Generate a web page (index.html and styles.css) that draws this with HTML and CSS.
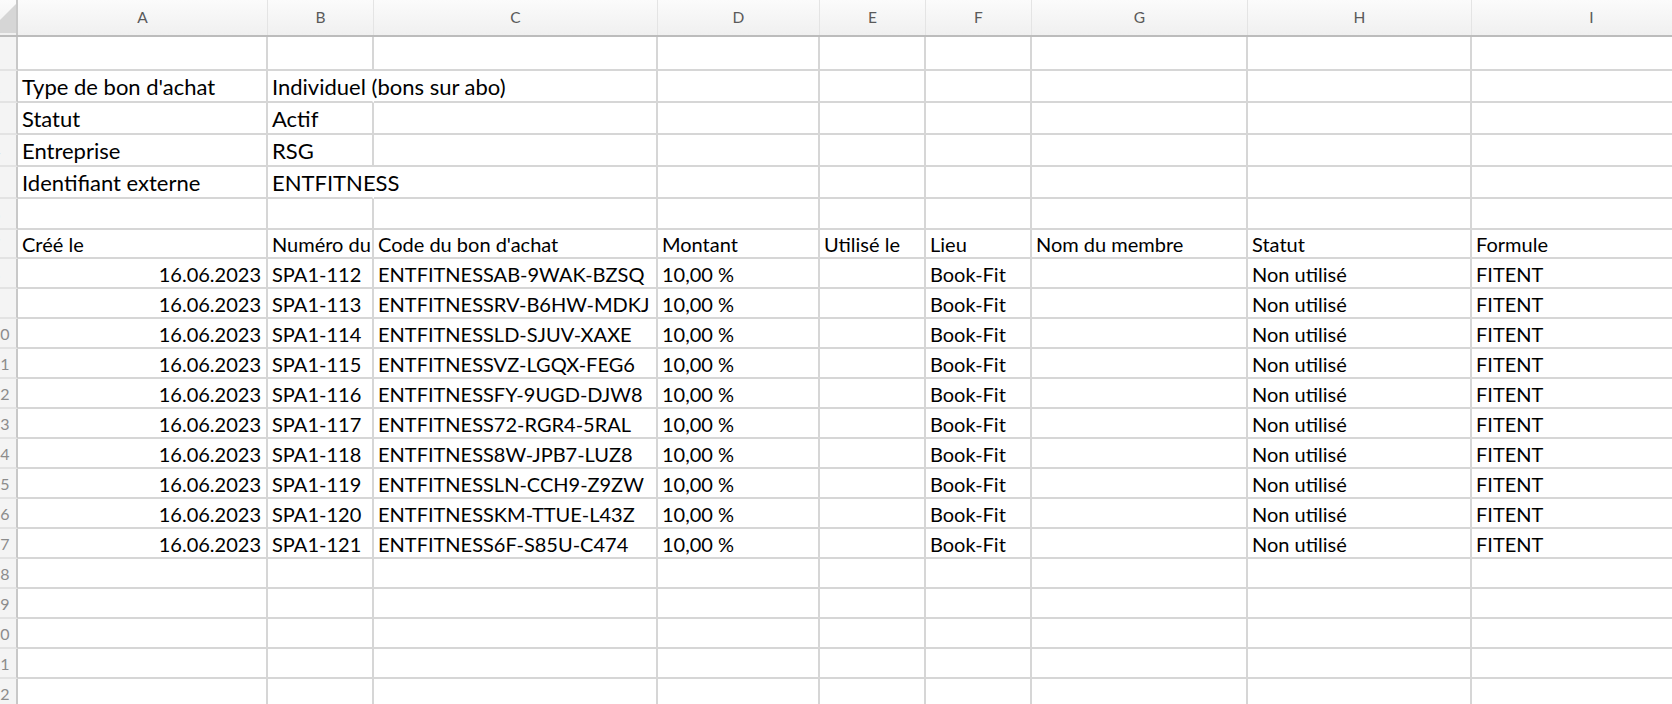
FILE: index.html
```html
<!DOCTYPE html>
<html lang="fr">
<head>
  <meta charset="UTF-8" />
  <meta name="viewport" content="width=device-width, initial-scale=1.0"/>
  <title>Bons d'achat - ENTFITNESS</title>
  <link rel="stylesheet" href="styles.css">
</head>
<body>
  <div class="sheet">
    <div class="row head">
      <div class="corner">
        <svg width="16" height="35" viewBox="0 0 16 35"><polygon points="16,4 16,33 0,33 0,20" fill="#d6d6d6"/></svg>
      </div>
      <div class="col">A</div>
      <div class="col">B</div>
      <div class="col">C</div>
      <div class="col">D</div>
      <div class="col">E</div>
      <div class="col">F</div>
      <div class="col">G</div>
      <div class="col">H</div>
      <div class="col">I</div>
    </div>

    <div class="row r1">
      <div class="num">1</div>
      <div class="cell"></div><div class="cell"></div><div class="cell"></div><div class="cell"></div><div class="cell"></div><div class="cell"></div><div class="cell"></div><div class="cell"></div><div class="cell"></div>
    </div>
    <div class="row meta">
      <div class="num">2</div>
      <div class="cell">Type de bon d'achat</div><div class="cell spill">Individuel (bons sur abo)</div><div class="cell"></div><div class="cell"></div><div class="cell"></div><div class="cell"></div><div class="cell"></div><div class="cell"></div><div class="cell"></div>
    </div>
    <div class="row meta">
      <div class="num">3</div>
      <div class="cell">Statut</div><div class="cell">Actif</div><div class="cell"></div><div class="cell"></div><div class="cell"></div><div class="cell"></div><div class="cell"></div><div class="cell"></div><div class="cell"></div>
    </div>
    <div class="row meta">
      <div class="num">4</div>
      <div class="cell">Entreprise</div><div class="cell">RSG</div><div class="cell"></div><div class="cell"></div><div class="cell"></div><div class="cell"></div><div class="cell"></div><div class="cell"></div><div class="cell"></div>
    </div>
    <div class="row meta">
      <div class="num">5</div>
      <div class="cell">Identifiant externe</div><div class="cell spill">ENTFITNESS</div><div class="cell"></div><div class="cell"></div><div class="cell"></div><div class="cell"></div><div class="cell"></div><div class="cell"></div><div class="cell"></div>
    </div>
    <div class="row r6">
      <div class="num">6</div>
      <div class="cell"></div><div class="cell"></div><div class="cell"></div><div class="cell"></div><div class="cell"></div><div class="cell"></div><div class="cell"></div><div class="cell"></div><div class="cell"></div>
    </div>
    <div class="row titles">
      <div class="num">7</div>
      <div class="cell">Créé le</div><div class="cell clip">Numéro du</div><div class="cell">Code du bon d'achat</div><div class="cell">Montant</div><div class="cell">Utilisé le</div><div class="cell">Lieu</div><div class="cell">Nom du membre</div><div class="cell">Statut</div><div class="cell">Formule</div>
    </div>

    <div class="row data">
      <div class="num">8</div>
      <div class="cell right">16.06.2023</div><div class="cell">SPA1-112</div><div class="cell">ENTFITNESSAB-9WAK-BZSQ</div><div class="cell">10,00 %</div><div class="cell"></div><div class="cell">Book-Fit</div><div class="cell"></div><div class="cell">Non utilisé</div><div class="cell">FITENT</div>
    </div>
    <div class="row data">
      <div class="num">9</div>
      <div class="cell right">16.06.2023</div><div class="cell">SPA1-113</div><div class="cell">ENTFITNESSRV-B6HW-MDKJ</div><div class="cell">10,00 %</div><div class="cell"></div><div class="cell">Book-Fit</div><div class="cell"></div><div class="cell">Non utilisé</div><div class="cell">FITENT</div>
    </div>
    <div class="row data">
      <div class="num">10</div>
      <div class="cell right">16.06.2023</div><div class="cell">SPA1-114</div><div class="cell">ENTFITNESSLD-SJUV-XAXE</div><div class="cell">10,00 %</div><div class="cell"></div><div class="cell">Book-Fit</div><div class="cell"></div><div class="cell">Non utilisé</div><div class="cell">FITENT</div>
    </div>
    <div class="row data">
      <div class="num">11</div>
      <div class="cell right">16.06.2023</div><div class="cell">SPA1-115</div><div class="cell">ENTFITNESSVZ-LGQX-FEG6</div><div class="cell">10,00 %</div><div class="cell"></div><div class="cell">Book-Fit</div><div class="cell"></div><div class="cell">Non utilisé</div><div class="cell">FITENT</div>
    </div>
    <div class="row data">
      <div class="num">12</div>
      <div class="cell right">16.06.2023</div><div class="cell">SPA1-116</div><div class="cell">ENTFITNESSFY-9UGD-DJW8</div><div class="cell">10,00 %</div><div class="cell"></div><div class="cell">Book-Fit</div><div class="cell"></div><div class="cell">Non utilisé</div><div class="cell">FITENT</div>
    </div>
    <div class="row data">
      <div class="num">13</div>
      <div class="cell right">16.06.2023</div><div class="cell">SPA1-117</div><div class="cell">ENTFITNESS72-RGR4-5RAL</div><div class="cell">10,00 %</div><div class="cell"></div><div class="cell">Book-Fit</div><div class="cell"></div><div class="cell">Non utilisé</div><div class="cell">FITENT</div>
    </div>
    <div class="row data">
      <div class="num">14</div>
      <div class="cell right">16.06.2023</div><div class="cell">SPA1-118</div><div class="cell">ENTFITNESS8W-JPB7-LUZ8</div><div class="cell">10,00 %</div><div class="cell"></div><div class="cell">Book-Fit</div><div class="cell"></div><div class="cell">Non utilisé</div><div class="cell">FITENT</div>
    </div>
    <div class="row data">
      <div class="num">15</div>
      <div class="cell right">16.06.2023</div><div class="cell">SPA1-119</div><div class="cell">ENTFITNESSLN-CCH9-Z9ZW</div><div class="cell">10,00 %</div><div class="cell"></div><div class="cell">Book-Fit</div><div class="cell"></div><div class="cell">Non utilisé</div><div class="cell">FITENT</div>
    </div>
    <div class="row data">
      <div class="num">16</div>
      <div class="cell right">16.06.2023</div><div class="cell">SPA1-120</div><div class="cell">ENTFITNESSKM-TTUE-L43Z</div><div class="cell">10,00 %</div><div class="cell"></div><div class="cell">Book-Fit</div><div class="cell"></div><div class="cell">Non utilisé</div><div class="cell">FITENT</div>
    </div>
    <div class="row data">
      <div class="num">17</div>
      <div class="cell right">16.06.2023</div><div class="cell">SPA1-121</div><div class="cell">ENTFITNESS6F-S85U-C474</div><div class="cell">10,00 %</div><div class="cell"></div><div class="cell">Book-Fit</div><div class="cell"></div><div class="cell">Non utilisé</div><div class="cell">FITENT</div>
    </div>

    <div class="row data">
      <div class="num">18</div>
      <div class="cell"></div><div class="cell"></div><div class="cell"></div><div class="cell"></div><div class="cell"></div><div class="cell"></div><div class="cell"></div><div class="cell"></div><div class="cell"></div>
    </div>
    <div class="row data">
      <div class="num">19</div>
      <div class="cell"></div><div class="cell"></div><div class="cell"></div><div class="cell"></div><div class="cell"></div><div class="cell"></div><div class="cell"></div><div class="cell"></div><div class="cell"></div>
    </div>
    <div class="row data">
      <div class="num">20</div>
      <div class="cell"></div><div class="cell"></div><div class="cell"></div><div class="cell"></div><div class="cell"></div><div class="cell"></div><div class="cell"></div><div class="cell"></div><div class="cell"></div>
    </div>
    <div class="row data">
      <div class="num">21</div>
      <div class="cell"></div><div class="cell"></div><div class="cell"></div><div class="cell"></div><div class="cell"></div><div class="cell"></div><div class="cell"></div><div class="cell"></div><div class="cell"></div>
    </div>
    <div class="row data">
      <div class="num">22</div>
      <div class="cell"></div><div class="cell"></div><div class="cell"></div><div class="cell"></div><div class="cell"></div><div class="cell"></div><div class="cell"></div><div class="cell"></div><div class="cell"></div>
    </div>
  </div>
</body>
</html>
```

FILE: styles.css
```css
html,
body {
  margin: 0;
  padding: 0;
  background: #fff;
  overflow: hidden;
}

body {
  font-family: Lato, "Liberation Sans", sans-serif;
  color: #000;
}

.sheet {
  width: 1672px;
  height: 704px;
  overflow: hidden;
}

.row {
  display: grid;
  grid-template-columns: 18px 250px 106px 284px 162px 106px 106px 216px 224px 240px;
}

/* column letters */
.head {
  height: 37px;
  background: linear-gradient(to bottom, #fbfbfb, #f0f0f0);
  border-bottom: 2px solid #bcbcbc;
  box-sizing: border-box;
}

.corner {
  border-right: 2px solid #c8c8c8;
  overflow: hidden;
}

.corner svg {
  display: block;
}

.col {
  display: flex;
  align-items: center;
  justify-content: center;
  border-right: 1px solid #e4e4e4;
  font-size: 15.5px;
  color: #5a5a5a;
  padding-bottom: 2px;
}

/* row numbers, only the right edge of the column is on screen */
.num {
  background: #f4f4f4;
  border-right: 2px solid #c8c8c8;
  border-bottom: 2px solid #e3e3e3;
  overflow: hidden;
  white-space: nowrap;
  text-indent: -9px;
  font-size: 16px;
  color: #8c8c8c;
  display: flex;
  align-items: center;
}

.cell {
  border-right: 2px solid #d6d6d6;
  border-bottom: 2px solid #d6d6d6;
  padding: 0 5px 3px 4px;
  display: flex;
  align-items: flex-end;
  white-space: nowrap;
  line-height: 1;
  font-size: 20px;
}

.cell.right {
  justify-content: flex-end;
}

/* text runs into the empty cell next to it */
.cell.spill {
  border-right-color: transparent;
  overflow: visible;
  position: relative;
  z-index: 1;
}

.cell.clip {
  overflow: hidden;
  padding-right: 0;
}

.r1 { height: 34px; }
.meta { height: 32px; }
.meta .cell { font-size: 22px; }
.r6 { height: 31px; }
.titles { height: 29px; }
.data { height: 30px; }

.row > div {
  box-sizing: border-box;
}
```
